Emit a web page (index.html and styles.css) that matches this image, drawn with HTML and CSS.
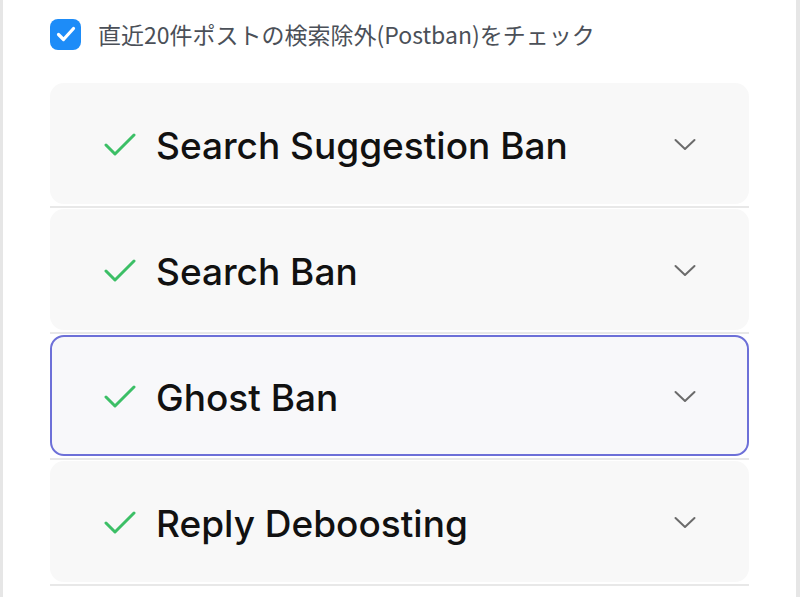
FILE: index.html
```html
<!DOCTYPE html>
<html lang="ja">
<head>
  <meta charset="UTF-8">
  <title>Shadowban check</title>
  <link rel="stylesheet" href="styles.css">
</head>
<body>

<div class="panel">
  <label class="option">
    <input type="checkbox" class="option-input" checked>
    <span class="option-box">
      <svg width="20" height="16" viewBox="0 0 20 16"><path d="M2.5 8.5 L7.5 13.5 L17.5 2.5" fill="none" stroke="#fff" stroke-width="3.2" stroke-linecap="round" stroke-linejoin="round"/></svg>
    </span>
    <span class="option-text">直近20件ポストの検索除外(Postban)をチェック</span>
  </label>

  <div class="results">
    <div class="result-item">
      <button class="result-head">
        <svg class="ok-icon" width="32" height="24" viewBox="0 0 32 24"><path d="M2 12 L11 21 L30 2" fill="none" stroke="#3cbf66" stroke-width="3" stroke-linecap="round" stroke-linejoin="round"/></svg>
        <span class="result-title">Search Suggestion Ban</span>
        <svg class="chevron" width="22" height="14" viewBox="0 0 22 14"><path d="M1.5 2 L11 11 L20.5 2" fill="none" stroke="#6b6b6b" stroke-width="2" stroke-linecap="round" stroke-linejoin="round"/></svg>
      </button>
    </div>
    <div class="result-item">
      <button class="result-head">
        <svg class="ok-icon" width="32" height="24" viewBox="0 0 32 24"><path d="M2 12 L11 21 L30 2" fill="none" stroke="#3cbf66" stroke-width="3" stroke-linecap="round" stroke-linejoin="round"/></svg>
        <span class="result-title">Search Ban</span>
        <svg class="chevron" width="22" height="14" viewBox="0 0 22 14"><path d="M1.5 2 L11 11 L20.5 2" fill="none" stroke="#6b6b6b" stroke-width="2" stroke-linecap="round" stroke-linejoin="round"/></svg>
      </button>
    </div>
    <div class="result-item">
      <button class="result-head is-focused">
        <svg class="ok-icon" width="32" height="24" viewBox="0 0 32 24"><path d="M2 12 L11 21 L30 2" fill="none" stroke="#3cbf66" stroke-width="3" stroke-linecap="round" stroke-linejoin="round"/></svg>
        <span class="result-title">Ghost Ban</span>
        <svg class="chevron" width="22" height="14" viewBox="0 0 22 14"><path d="M1.5 2 L11 11 L20.5 2" fill="none" stroke="#6b6b6b" stroke-width="2" stroke-linecap="round" stroke-linejoin="round"/></svg>
      </button>
    </div>
    <div class="result-item">
      <button class="result-head">
        <svg class="ok-icon" width="32" height="24" viewBox="0 0 32 24"><path d="M2 12 L11 21 L30 2" fill="none" stroke="#3cbf66" stroke-width="3" stroke-linecap="round" stroke-linejoin="round"/></svg>
        <span class="result-title">Reply Deboosting</span>
        <svg class="chevron" width="22" height="14" viewBox="0 0 22 14"><path d="M1.5 2 L11 11 L20.5 2" fill="none" stroke="#6b6b6b" stroke-width="2" stroke-linecap="round" stroke-linejoin="round"/></svg>
      </button>
    </div>
  </div>
</div>

</body>
</html>
```

FILE: styles.css
```css
html, body {
  margin: 0;
  padding: 0;
  height: 100%;
}
body {
  background: #e6e6e6;
  font-family: Inter, "Noto Sans CJK JP", sans-serif;
  overflow: hidden;
}
.panel {
  background: #fff;
  margin: 0 4px 0 3px;
  min-height: 100%;
  padding: 0 47px;
  box-sizing: border-box;
}

/* チェックボックス */
.option {
  display: flex;
  align-items: center;
  height: 83px;
  padding-bottom: 15px;
  box-sizing: border-box;
  cursor: pointer;
}
.option-input {
  display: none;
}
.option-box {
  width: 31px;
  height: 31px;
  border-radius: 8px;
  background: #1d8cf8;
  display: flex;
  align-items: center;
  justify-content: center;
  flex-shrink: 0;
}
.option-text {
  margin-left: 17px;
  font-family: "Noto Sans CJK JP", sans-serif;
  font-size: 23px;
  color: #4b5058;
}

/* 結果リスト */
.result-item {
  padding: 1px 0 2px;
  border-bottom: 2px solid #e8e8e8;
}
.result-item:first-child {
  padding-top: 0;
}
.result-head {
  display: flex;
  align-items: center;
  width: 100%;
  height: 121px;
  padding: 3px 51px 0 52px;
  background: #f8f8f8;
  border: 2px solid transparent;
  border-radius: 14px;
  box-sizing: border-box;
  font-family: inherit;
  cursor: pointer;
  text-align: left;
}
.result-head.is-focused {
  border-color: #6d70d8;
  background: #f8f8fa;
}
.ok-icon {
  flex-shrink: 0;
}
.result-title {
  flex: 1;
  margin-left: 20px;
  font-size: 37px;
  font-weight: 500;
  color: #111;
}
.chevron {
  flex-shrink: 0;
}
```
